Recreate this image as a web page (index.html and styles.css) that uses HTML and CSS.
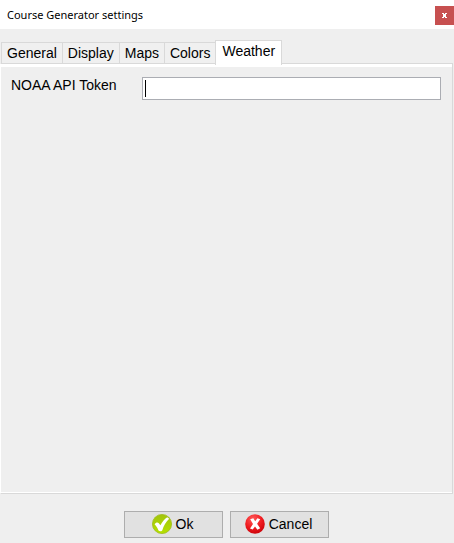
FILE: index.html
```html
<!DOCTYPE html>
<html lang="en">
<head>
<meta charset="utf-8">
<title>Course Generator settings</title>
<link rel="stylesheet" href="styles.css">
</head>
<body>
<main class="dialog">
  <header class="titlebar">
    <h1 class="title">Course Generator settings</h1>
    <button class="close" type="button" aria-label="Close">
      <svg width="5" height="5" viewBox="0 0 5 5" shape-rendering="crispEdges" fill="#fff"><path d="M0 0h2v1H0zM3 0h2v1H3zM1 1h3v1H1zM1 2h3v1H1zM1 3h3v1H1zM0 4h2v1H0zM3 4h2v1H3z"/></svg>
    </button>
  </header>
  <nav class="tabs" role="tablist">
    <button class="tab" type="button" role="tab" aria-selected="false">General</button>
    <button class="tab" type="button" role="tab" aria-selected="false">Display</button>
    <button class="tab" type="button" role="tab" aria-selected="false">Maps</button>
    <button class="tab" type="button" role="tab" aria-selected="false">Colors</button>
    <button class="tab selected" type="button" role="tab" aria-selected="true">Weather</button>
  </nav>
  <section class="panel" role="tabpanel">
    <div class="field">
      <label for="token">NOAA API Token</label>
      <input id="token" type="text" autocomplete="off">
      <span class="caret"></span>
    </div>
  </section>
  <footer class="actions">
    <button class="action" type="button">
      <svg width="20" height="20" viewBox="0 0 20 20"><defs><linearGradient id="green" x1="0" y1="0" x2="0" y2="1"><stop offset="0" stop-color="#a2c40c"/><stop offset="1" stop-color="#b5e000"/></linearGradient></defs><circle cx="10" cy="10" r="9.6" fill="url(#green)" stroke="#9fbd1c" stroke-width=".8"/><path d="M2.600 10.200C3.800 8.400 5.400 7.900 6.600 8.900L8.400 11.200C10 8 12.500 5 15.200 3.200L17.200 4.700C13.900 7.800 11.700 11.800 10.200 16.400C9 17.600 7.300 17.400 6.500 16.400C5.600 14 4.400 12 2.600 10.200Z" fill="#fff"/></svg>
      Ok
    </button>
    <button class="action" type="button">
      <svg width="20" height="20" viewBox="0 0 20 20"><defs><radialGradient id="red" cx=".4" cy=".25" r=".8"><stop offset="0" stop-color="#ff5a5a"/><stop offset=".55" stop-color="#f01c20"/><stop offset="1" stop-color="#c80008"/></radialGradient></defs><circle cx="10" cy="10" r="9.800" fill="url(#red)"/><path d="M5.200 5.200L8.300 4.300L10.200 7.200L12.400 4.300L15.200 5.200L12.100 9.800L15.200 14.200L12.400 15.700L10 12.500L7.700 15.500L5 14.400L8 9.900Z" fill="#fff"/></svg>
      Cancel
    </button>
  </footer>
</main>
</body>
</html>
```
FILE: styles.css
```css
* {
  box-sizing: border-box;
}

body {
  margin: 0;
  background: #efefef;
  color: #000;
  font: 14px/16px "Liberation Sans", Arial, sans-serif;
}

button,
input {
  font: inherit;
  color: inherit;
  border-radius: 0;
}

.dialog {
  display: flex;
  flex-direction: column;
  min-height: 100vh;
}

.titlebar {
  display: flex;
  align-items: center;
  justify-content: space-between;
  height: 29px;
  padding-left: 7px;
  background: #fff;
}

.title {
  margin: 0;
  font: 11px/16px "Segoe UI", "Noto Sans", sans-serif;
}

.close {
  display: flex;
  align-items: center;
  justify-content: center;
  width: 19px;
  height: 19px;
  margin-top: 2px;
  padding: 0;
  border: 0;
  background: #c75050;
}

.tabs {
  display: flex;
  align-items: flex-end;
  padding: 11px 1px 0;
}

.tab {
  height: 21px;
  padding: 0 5px;
  border: 1px solid #d9d9d9;
  border-width: 1px 0 0 1px;
  background: #f0f0f0;
}

.tab.selected {
  z-index: 1;
  height: 25px;
  margin-bottom: -2px;
  padding: 0 6px 4px;
  border-right-width: 1px;
  background: #fff;
}

.panel {
  flex: 1;
  margin-right: 1px;
  padding: 10px 11px 10px 10px;
  border: 1px solid #d9d9d9;
  border-left-color: #fff;
  background: #efefef;
  box-shadow: inset 0 3px #fff, inset 0 -1px #fff;
}

.field {
  display: grid;
  grid-template-columns: 131px 1fr;
  position: relative;
  margin-top: 3px;
}

.field input {
  width: 100%;
  height: 23px;
  padding: 0 3px;
  border: 1px solid #abadb3;
  background: #fff;
  outline: 0;
}

.caret {
  position: absolute;
  left: 134px;
  top: 3px;
  width: 1px;
  height: 17px;
  background: #000;
}

.actions {
  display: flex;
  justify-content: center;
  gap: 7px;
  padding: 17px 2px 5px 0;
}

.action {
  display: flex;
  align-items: center;
  justify-content: center;
  gap: 4px;
  width: 99px;
  height: 27px;
  padding: 0 1px 2px 0;
  border: 1px solid #adadad;
  background: #e1e1e1;
}
```
